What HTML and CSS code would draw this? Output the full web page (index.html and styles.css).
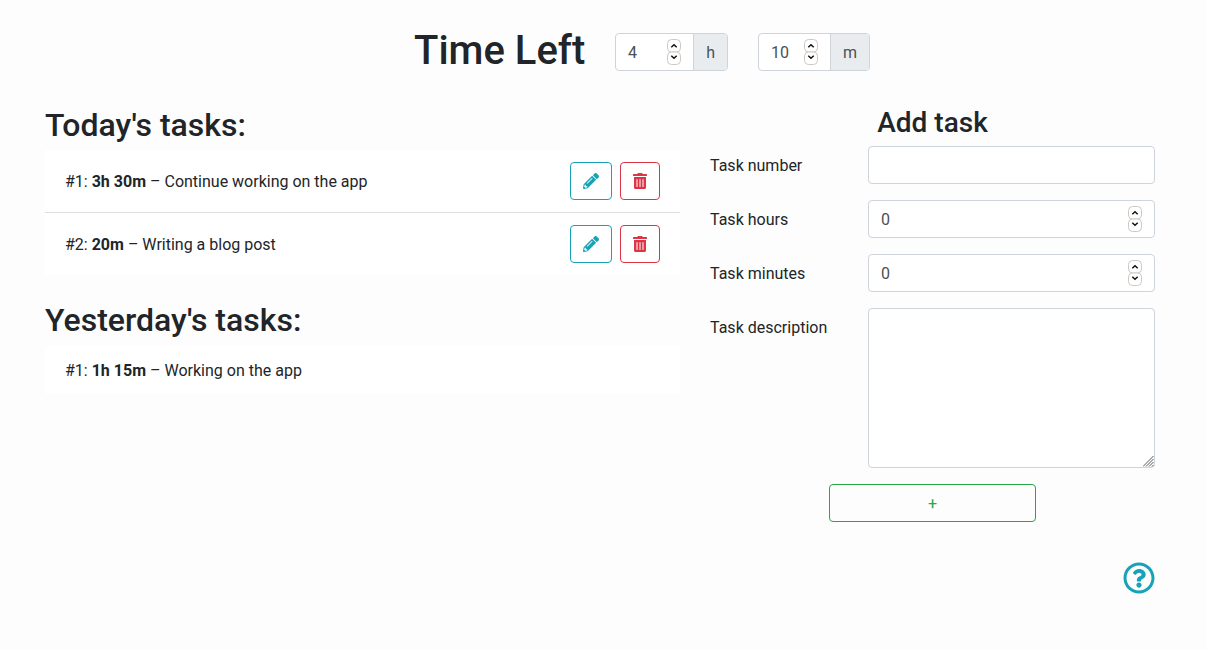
FILE: index.html
```html
<!DOCTYPE html>
<html lang="en">
<head>
<meta charset="utf-8">
<title>Time Left</title>
<link rel="stylesheet" href="styles.css">
</head>
<body>
<svg class="sprite" width="0" height="0" aria-hidden="true">
  <symbol id="pencil" viewBox="0 0 512 512"><path d="M497.9 142.1l-46.1 46.1c-4.7 4.7-12.3 4.7-17 0l-111-111c-4.7-4.7-4.7-12.3 0-17l46.1-46.1c18.7-18.7 49.1-18.7 67.9 0l60.1 60.1c18.8 18.7 18.8 49.1 0 67.9zM284.2 99.8L21.6 362.4.4 483.9c-2.9 16.4 11.4 30.6 27.8 27.8l121.5-21.3 262.6-262.6c4.7-4.7 4.7-12.3 0-17l-111-111c-4.8-4.7-12.4-4.7-17.1 0zM124.1 339.9c-5.5-5.5-5.5-14.3 0-19.8l154-154c5.5-5.5 14.3-5.5 19.8 0s5.5 14.3 0 19.8l-154 154c-5.5 5.5-14.3 5.5-19.8 0zM88 424h48v36.3l-64.5 11.3-31.1-31.1L51.7 376H88v48z"/></symbol>
  <symbol id="trash" viewBox="0 0 448 512"><path d="M32 464a48 48 0 0 0 48 48h288a48 48 0 0 0 48-48V128H32zm272-256a16 16 0 0 1 32 0v224a16 16 0 0 1-32 0zm-96 0a16 16 0 0 1 32 0v224a16 16 0 0 1-32 0zm-96 0a16 16 0 0 1 32 0v224a16 16 0 0 1-32 0zM432 32H312l-9.4-18.7A24 24 0 0 0 281.1 0H166.8a23.72 23.72 0 0 0-21.4 13.3L136 32H16A16 16 0 0 0 0 48v32a16 16 0 0 0 16 16h416a16 16 0 0 0 16-16V48a16 16 0 0 0-16-16z"/></symbol>
  <symbol id="spinner" viewBox="0 0 14 26"><g fill="#fff" stroke="#cfc8c2"><rect x=".5" y=".5" width="13" height="12.5" rx="4"/><rect x=".5" y="13" width="13" height="12.5" rx="4"/></g><path d="M4.3 8.3 7 5.8l2.7 2.5M4.3 16.8 7 19.3l2.7-2.5" fill="none" stroke="#111" stroke-width="1.5"/></symbol>
</svg>
<main class="page">
  <header class="header">
    <h1 class="title">Time Left</h1>
    <div class="group group-hours">
      <div class="field"><span class="text">4</span><svg class="spinner"><use href="#spinner"/></svg></div>
      <span class="unit">h</span>
    </div>
    <div class="group group-minutes">
      <div class="field"><span class="text">10</span><svg class="spinner"><use href="#spinner"/></svg></div>
      <span class="unit">m</span>
    </div>
  </header>
  <div class="columns">
    <section class="lists">
      <h2 class="heading">Today's tasks:</h2>
      <ul class="list">
        <li class="item">
          <span class="text">#1: <b>3h 30m</b> – Continue working on the app</span>
          <span class="actions">
            <button class="btn edit" aria-label="Edit"><svg width="16" height="16"><use href="#pencil"/></svg></button>
            <button class="btn remove" aria-label="Delete"><svg width="14" height="16"><use href="#trash"/></svg></button>
          </span>
        </li>
        <li class="item">
          <span class="text">#2: <b>20m</b> – Writing a blog post</span>
          <span class="actions">
            <button class="btn edit" aria-label="Edit"><svg width="16" height="16"><use href="#pencil"/></svg></button>
            <button class="btn remove" aria-label="Delete"><svg width="14" height="16"><use href="#trash"/></svg></button>
          </span>
        </li>
      </ul>
      <h2 class="heading">Yesterday's tasks:</h2>
      <ul class="list">
        <li class="item item-plain"><span>#1: <b>1h 15m</b> – Working on the app</span></li>
      </ul>
    </section>
    <section class="form">
      <h3 class="form-title">Add task</h3>
      <div class="row"><span class="label">Task number</span><div class="control"></div></div>
      <div class="row"><span class="label">Task hours</span><div class="control"><span class="text">0</span><svg class="spinner"><use href="#spinner"/></svg></div></div>
      <div class="row"><span class="label">Task minutes</span><div class="control"><span class="text">0</span><svg class="spinner"><use href="#spinner"/></svg></div></div>
      <div class="row">
        <span class="label">Task description</span>
        <div class="area-wrap">
          <textarea class="area" aria-label="Task description"></textarea>
          <svg class="grip" width="11" height="11" viewBox="0 0 11 11"><path d="M0 10.5 10.5 0M3 10.5 10.5 3M6 10.5 10.5 6M9 10.5 10.5 9" stroke="#555" fill="none"/></svg>
        </div>
      </div>
      <button class="btn add"><span class="text">+</span></button>
      <svg class="help" width="32" height="32" viewBox="0 0 512 512"><path d="M256 8C119.043 8 8 119.083 8 256c0 136.997 111.043 248 248 248s248-111.003 248-248C504 119.083 392.957 8 256 8zm0 448c-110.532 0-200-89.431-200-200 0-110.495 89.472-200 200-200 110.491 0 200 89.471 200 200 0 110.53-89.431 200-200 200zm107.244-255.2c0 67.052-72.421 68.084-72.421 92.863V300c0 6.627-5.373 12-12 12h-45.647c-6.627 0-12-5.373-12-12v-8.659c0-35.745 27.1-50.034 47.579-61.516 17.561-9.845 28.324-16.541 28.324-29.579 0-17.246-21.999-28.693-39.784-28.693-23.189 0-33.894 10.977-48.942 29.969-4.057 5.12-11.46 6.071-16.666 2.124l-27.824-21.098c-5.107-3.872-6.251-11.066-2.644-16.363C184.846 131.491 214.94 112 261.794 112c49.071 0 101.45 38.304 101.45 88.8zM298 368c0 23.159-18.841 42-42 42s-42-18.841-42-42 18.841-42 42-42 42 18.841 42 42z"/></svg>
    </section>
  </div>
</main>
</body>
</html>
```
FILE: styles.css
```css
* { box-sizing: border-box; }
body { margin: 0; background: #fdfdfd; color: #212529; font: 16px/1.5 Roboto, sans-serif; }
h1, h2, h3, ul { margin: 0; padding: 0; font-weight: 500; line-height: 1.2; }
.sprite { position: absolute; }
.page { width: 1110px; margin-left: 45px; padding-top: 26px; }
.header { display: flex; height: 48px; padding-left: 369px; }
.title { width: 201px; padding-top: 1px; font-size: 40px; white-space: nowrap; }
.group { display: flex; height: 38px; margin-top: 7px; border: 1px solid #ced4da; border-radius: 4px; overflow: hidden; background: #fff; }
.group-hours { width: 113px; margin-right: 30px; }
.group-minutes { width: 112px; }
.field { flex: 1; display: flex; align-items: center; justify-content: space-between; padding: 0 12px; color: #495057; }
.text { padding-top: 2px; }
.unit { padding: 7px 12px 5px; border-left: 1px solid #ced4da; background: #e9ecef; color: #495057; }
.spinner { width: 14px; height: 26px; }
.columns { display: grid; grid-template-columns: 635px 445px; column-gap: 30px; padding-top: 30px; }
.heading { margin-bottom: 6px; padding-top: 2px; font-size: 32px; }
.list { margin-bottom: 24px; list-style: none; font-weight: 400; line-height: 1.5; background: #fff; }
.item { display: flex; align-items: center; justify-content: space-between; padding: 12px 20px; }
.item-plain { padding: 13px 20px 11px; }
.item + .item { border-top: 1px solid #dfdfdf; }
.item b { font-weight: 700; }
.actions { display: flex; gap: 8px; }
.btn { display: flex; align-items: center; justify-content: center; height: 38px; padding: 0 12px; border: 1px solid; border-radius: 4px; background: transparent; font: inherit; }
.btn svg { fill: currentColor; }
.edit { color: #17a2b8; }
.remove { color: #dc3545; }
.form { display: flex; flex-direction: column; }
.form-title { margin-bottom: 6px; padding-top: 2px; font-size: 28px; text-align: center; }
.row { display: grid; grid-template-columns: 158px 287px; margin-bottom: 16px; }
.label { padding-top: 8px; }
.control { display: flex; align-items: center; justify-content: space-between; height: 38px; padding: 0 12px; border: 1px solid #ced4da; border-radius: 4px; background: #fff; color: #495057; }
.area-wrap { position: relative; height: 160px; }
.area { display: block; width: 100%; height: 100%; border: 1px solid #ced4da; border-radius: 4px; background: #fff; resize: none; }
.grip { position: absolute; right: 1px; bottom: 1px; }
.add { width: 207px; align-self: center; color: #28a745; }
.help { align-self: flex-end; margin-top: 40px; fill: #17a2b8; }
```
